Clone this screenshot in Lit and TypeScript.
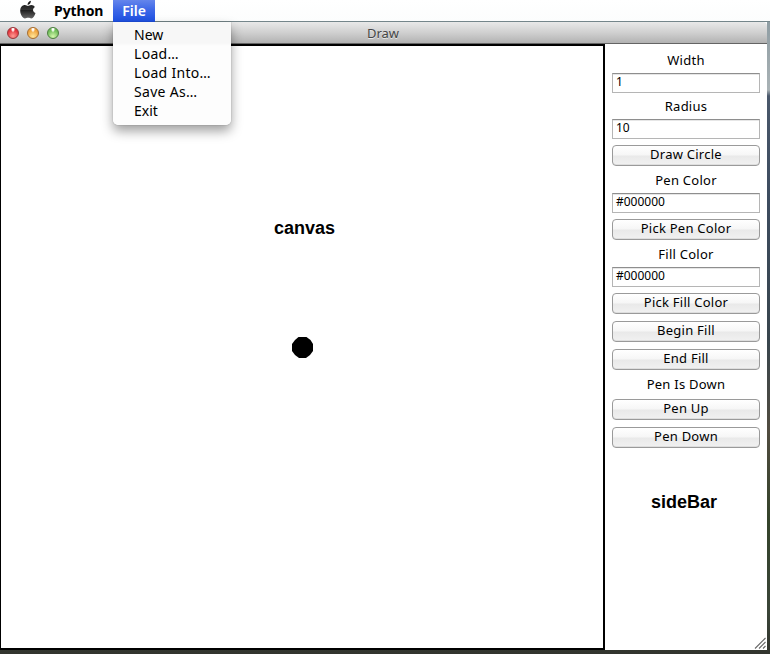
import { LitElement, html, css, svg } from "lit";
import { customElement } from "lit/decorators.js";

type Row = { kind: "label" | "field" | "button"; text: string; cls?: string };

const ROWS: Row[] = [
  { kind: "label", text: "Width" },
  { kind: "field", text: "1" },
  { kind: "label", text: "Radius" },
  { kind: "field", text: "10" },
  { kind: "button", text: "Draw Circle" },
  { kind: "label", text: "Pen Color", cls: "after" },
  { kind: "field", text: "#000000" },
  { kind: "button", text: "Pick Pen Color" },
  { kind: "label", text: "Fill Color", cls: "after" },
  { kind: "field", text: "#000000" },
  { kind: "button", text: "Pick Fill Color" },
  { kind: "button", text: "Begin Fill", cls: "next" },
  { kind: "button", text: "End Fill", cls: "next" },
  { kind: "label", text: "Pen Is Down", cls: "status" },
  { kind: "button", text: "Pen Up", cls: "flush" },
  { kind: "button", text: "Pen Down", cls: "next" },
];

const MENU = ["New", "Load…", "Load Into…", "Save As…", "Exit"];

@customElement("app-root")
export class AppRoot extends LitElement {
  static styles = css`
    :host {
      display: block;
      position: relative;
      width: 770px;
      height: 654px;
      overflow: hidden;
      box-sizing: border-box;
      font: 13px/16px "Noto Sans", "Open Sans", sans-serif;
      color: #000;
      background: linear-gradient(#8f9da3 22px, #a9b2b5 90px, #4a586b 96px, #3d4c5f 200px,
        #38454d 340px, #514c40 430px, #34432a 520px, #3a4538 610px, #32342e 654px);
    }
    * { box-sizing: border-box; }
    .menubar {
      height: 22px;
      display: flex;
      align-items: stretch;
      background: linear-gradient(#fff, #fcfdfd);
      border-bottom: 1px solid #75868b;
      font-size: 14px;
      line-height: 21px;
    }
    .apple { width: 16px; height: 19px; margin-left: 20px; display: block; }
    .python { margin-left: 18px; width: 50px; font-weight: 700; white-space: nowrap; letter-spacing: -0.05px; }
    .file {
      margin-left: 9px;
      width: 42px;
      height: 22px;
      text-align: center;
      color: #fff;
      font-weight: 600;
      background: linear-gradient(#6485ec, #3d67e7 45%, #1c4fe2);
    }
    .window { width: 767px; height: 628px; background: #fff; }
    .titlebar {
      height: 22px;
      display: flex;
      align-items: center;
      position: relative;
      padding-left: 7px;
      gap: 8px;
      background: linear-gradient(#e9e9e9, #d0d0d0 50%, #b2b2b2);
      border-bottom: 1px solid #646464;
      border-radius: 0 4px 0 0;
    }
    .light { width: 12px; height: 12px; border-radius: 50%; border: 1px solid #777; }
    .red { background: radial-gradient(ellipse at 50% 8%, #fff 0 12%, transparent 30%), radial-gradient(circle at 50% 80%, #ff9b94, #e3343c 65%); border-color: #97373b; }
    .amber { background: radial-gradient(ellipse at 50% 8%, #fff 0 12%, transparent 30%), radial-gradient(circle at 50% 85%, #ffe79a, #f0a43e 65%); border-color: #a66d30; }
    .green { background: radial-gradient(ellipse at 50% 8%, #fff 0 12%, transparent 30%), radial-gradient(circle at 50% 85%, #d5f7ad, #70bd59 65%); border-color: #4c7e3f; }
    .title {
      flex: 1;
      padding-right: 61px;
      margin-left: -7px;
      text-align: center;
      color: #454545;
      text-shadow: 0 1px 0 #e8e8e8;
    }
    .body { display: flex; height: 606px; }
    .canvas {
      width: 605px;
      border: 2px solid #000;
      border-left-width: 1px;
      display: flex;
      flex-direction: column;
      align-items: center;
    }
    .caption { font: 700 18px/22px "Liberation Sans", Arial, sans-serif; white-space: nowrap; }
    .canvas .caption { margin-top: 171px; margin-left: 5px; }
    .dot { display: block; width: 21px; height: 21px; margin-top: 98px; margin-left: 1px; }
    .sidebar { flex: 1; padding: 3px 7px 0; display: flex; flex-direction: column; position: relative; }
    .label { height: 26px; padding-top: 5px; text-align: center; flex: none; letter-spacing: 0.25px; }
    .after { height: 27px; padding-top: 6px; }
    .status { height: 29px; padding-top: 6px; }
    .field {
      height: 20px;
      flex: none;
      border: 1px solid #b5b5b5;
      border-top-color: #8e8e8e;
      box-shadow: inset 0 1px 0 #e6e6e6;
      background: #fff;
      padding-left: 3px;
      font-size: 12px;
    }
    .button {
      height: 21px;
      flex: none;
      margin: 6px 0 0;
      padding: 0;
      border: 1px solid #9a9a9a;
      border-radius: 4px;
      background: linear-gradient(#fff, #f6f6f6 48%, #e9e9e9 52%, #f1f1f1);
      box-shadow: inset 0 -1px 0 #dedede;
      font: inherit;
      line-height: 16px;
      padding-bottom: 3px;
      letter-spacing: 0.25px;
    }
    .next { margin-top: 7px; }
    .flush { margin-top: 0; }
    .sidebar .caption { margin-top: 43px; text-align: center; padding-right: 4px; }
    .grip { position: absolute; right: 1px; bottom: 1px; width: 12px; height: 12px; }
    .menu {
      position: absolute;
      left: 113px;
      top: 22px;
      width: 118px;
      height: 103px;
      padding: 3px 0 0 21px;
      background: linear-gradient(#f7f7f7 21px, #fdfdfd 24px);
      border-radius: 0 0 5px 5px;
      box-shadow: 0 6px 12px rgba(0, 0, 0, 0.38), 0 0 1px rgba(0, 0, 0, 0.5);
      font-size: 14px;
      line-height: 19px;
      letter-spacing: 0.3px;
    }
    .item { height: 19px; white-space: nowrap; }
    .item:first-child, .item:last-child { letter-spacing: 0; }
  `;

  private row(r: Row) {
    const c = `${r.kind} ${r.cls ?? ""}`;
    return r.kind === "button"
      ? html`<button class=${c}>${r.text}</button>`
      : html`<div class=${c}>${r.text}</div>`;
  }

  render() {
    return html`
      <div class="menubar">
        <svg class="apple" viewBox="0 0 16 19">
          <defs>
            <linearGradient id="g" x2="0" y2="1">
              <stop offset="0" stop-color="#111" /><stop offset=".5" stop-color="#333" />
              <stop offset=".52" stop-color="#1c1c1c" /><stop offset="1" stop-color="#666" />
            </linearGradient>
          </defs>
          <path fill="url(#g)" d="M10.900 .8C11 3 9.500 4.900 7.600 5C7.400 3.200 9 1.200 10.900 .8ZM7.900 6.100C8.700 6.100 9.700 5.100 11.300 5.100C12.800 5.100 14.200 5.900 14.900 7C12.300 8.500 12.500 11.900 15.500 13C14.700 15.800 13.100 18.400 11.400 18.400C10.200 18.400 9.600 17.700 8.200 17.700C6.800 17.700 6.100 18.400 5 18.400C2.800 18.400 .2 14.500 .2 10.800C.2 7.200 2.500 5.100 4.900 5.100C6.300 5.100 7.200 6.100 7.900 6.100Z" />
        </svg>
        <div class="python">Python</div>
        <div class="file">File</div>
      </div>
      <div class="window">
        <div class="titlebar">
          <span class="light red"></span><span class="light amber"></span><span class="light green"></span>
          <span class="title">Draw</span>
        </div>
        <div class="body">
          <div class="canvas">
            <div class="caption">canvas</div>
            <svg class="dot" viewBox="0 0 21 21">${svg`<path d="M6.500 0H14.500L18.500 3L21 7V14L18 18L14 21H7L3 18L0 14V7L3 3Z" />`}</svg>
          </div>
          <div class="sidebar">
            ${ROWS.map((r) => this.row(r))}
            <div class="caption">sideBar</div>
            <svg class="grip" viewBox="0 0 12 12"><path d="M1 11.500L11.500 1M5 11.500L11.500 5M9 11.500L11.500 9" fill="none" stroke="#666" stroke-width="1.100" /></svg>
          </div>
        </div>
      </div>
      <div class="menu">${MENU.map((m) => html`<div class="item">${m}</div>`)}</div>
    `;
  }
}
